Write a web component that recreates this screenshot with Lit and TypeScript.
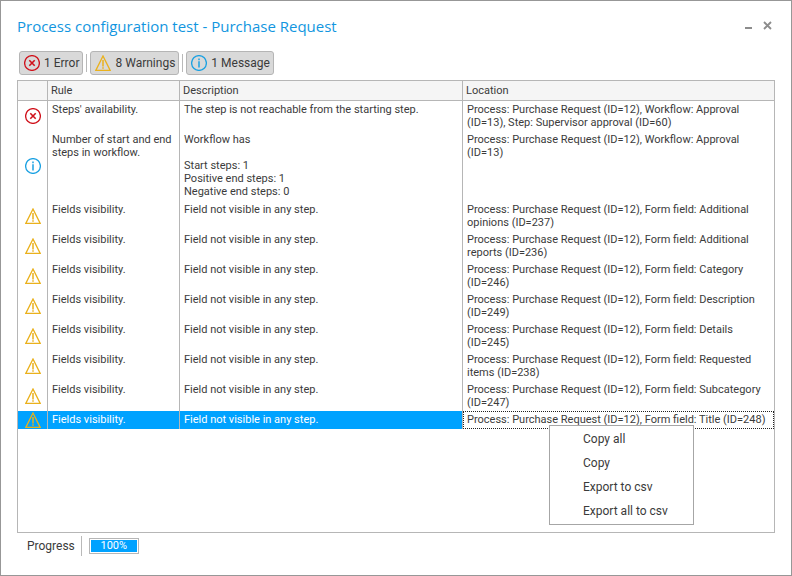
import { LitElement, html, svg, css, nothing } from "lit";
import { customElement, property, state } from "lit/decorators.js";
import { classMap } from "lit/directives/class-map.js";

type Severity = "error" | "warning" | "info";

interface Finding {
  severity: Severity;
  rule: string;
  description: string;
  location: string;
}

const fieldFinding = (field: string, id: number): Finding => ({
  severity: "warning",
  rule: "Fields visibility.",
  description: "Field not visible in any step.",
  location: `Process: Purchase Request (ID=12), Form field: ${field} (ID=${id})`,
});

const FINDINGS: Finding[] = [
  {
    severity: "error",
    rule: "Steps' availability.",
    description: "The step is not reachable from the starting step.",
    location:
      "Process: Purchase Request (ID=12), Workflow: Approval (ID=13), Step: Supervisor approval (ID=60)",
  },
  {
    severity: "info",
    rule: "Number of start and end steps in workflow.",
    description:
      "Workflow has\n\nStart steps: 1\nPositive end steps: 1\nNegative end steps: 0",
    location: "Process: Purchase Request (ID=12), Workflow: Approval (ID=13)",
  },
  fieldFinding("Additional opinions", 237),
  fieldFinding("Additional reports", 236),
  fieldFinding("Category", 246),
  fieldFinding("Description", 249),
  fieldFinding("Details", 245),
  fieldFinding("Requested items", 238),
  fieldFinding("Subcategory", 247),
  fieldFinding("Title", 248),
];

const FILTERS: { severity: Severity; label: string }[] = [
  { severity: "error", label: "1 Error" },
  { severity: "warning", label: "8 Warnings" },
  { severity: "info", label: "1 Message" },
];

const MENU = ["Copy all", "Copy", "Export to csv", "Export all to csv"];

@customElement("severity-icon")
export class SeverityIcon extends LitElement {
  @property() severity: Severity = "info";

  static styles = css`
    :host { display: block; width: 16px; height: 16px; flex: none; }
    svg { display: block; fill: none; }
    .error { stroke: #d0111b; }
    .warning { stroke: #eab11c; }
    .info { stroke: #1ba1e2; }
  `;

  private shape() {
    switch (this.severity) {
      case "error":
        return svg`<circle cx="8" cy="8" r="7.4" stroke-width="1.3"/>
          <path d="M5.3 5.3l5.4 5.4M10.7 5.3l-5.4 5.4" stroke-width="1.6"/>`;
      case "warning":
        return svg`<path d="M8 1L15.2 15.4H.8z" stroke-width="1.3"/>
          <path d="M8 5v6.4M8 12.2v1.6" stroke-width="1.5"/>`;
      default:
        return svg`<circle cx="8" cy="8" r="7.4" stroke-width="1.3"/>
          <path d="M8 6.2v6.4M8 3.4v1.8" stroke-width="1.5"/>`;
    }
  }

  render() {
    return html`<svg class=${this.severity} width="16" height="16" viewBox="0 0 16 16" aria-hidden="true">${this.shape()}</svg>`;
  }
}

@customElement("app-root")
export class AppRoot extends LitElement {
  @state() private selected = FINDINGS.length - 1;

  static styles = css`
    :host {
      display: block;
      font: 12px/16px Roboto, "Noto Sans", sans-serif;
      color: #3b3b3b;
    }
    * { box-sizing: border-box; }
    button { font: inherit; color: inherit; margin: 0; }
    .window {
      min-height: 100vh;
      display: flex;
      flex-direction: column;
      padding: 14px 16px 19px;
      border: 1px solid #979797;
      background: #fff;
    }
    .titlebar { display: flex; justify-content: space-between; }
    h1 {
      margin: 0;
      font-family: "Open Sans", "Noto Sans", sans-serif;
      font-size: 15px;
      line-height: 22px;
      font-weight: 400;
      color: #1296e0;
    }
    .controls { display: flex; gap: 8px; padding-top: 5px; }
    .control {
      width: 12px;
      height: 12px;
      padding: 0;
      border: 0;
      background: none;
    }
    .control svg { display: block; stroke: #8c8c8c; fill: none; }
    .toolbar {
      display: flex;
      align-items: center;
      gap: 3px;
      padding: 14px 2px 5px;
    }
    .divider { width: 1px; background: #b9b9b9; height: 18px; }
    .filter {
      display: flex;
      align-items: center;
      gap: 4px;
      height: 24px;
      padding: 0 3px 0 4px;
      border: 1px solid #b5b5b5;
      border-radius: 3px;
      background: #d9d9d9;
    }
    .grid {
      flex: 1;
      border: 1px solid #b6b6b6;
      font-size: 11px;
      line-height: 13px;
    }
    table {
      width: 100%;
      table-layout: fixed;
      border-collapse: separate;
      border-spacing: 0;
    }
    .col-icon { width: 30px; }
    .col-rule { width: 132px; }
    .col-desc { width: 283px; }
    th {
      height: 20px;
      padding: 0 3px;
      text-align: left;
      font-weight: 400;
      background: #f5f5f5;
      border-bottom: 1px solid #b6b6b6;
    }
    th, td { border-right: 1px solid #b6b6b6; }
    th:last-child, td:last-child { border-right: 0; }
    td {
      height: 18px;
      padding: 2px 4px;
      vertical-align: top;
      white-space: pre-line;
    }
    .info td { height: 70px; }
    td.icon-cell { padding: 0 0 0 7px; vertical-align: middle; white-space: normal; }
    .selected td { background: #00a2ff; color: #fff; }
    .selected td.focus {
      position: relative;
      background: #fff;
      color: inherit;
      outline: 1px dotted #222;
      outline-offset: -1px;
    }
    .menu {
      position: absolute;
      left: 86px;
      top: 14px;
      width: 145px;
      margin: 0;
      padding: 1px 0;
      border: 1px solid #a6a6a6;
      background: #fff;
      list-style: none;
      white-space: normal;
    }
    .menu button {
      display: block;
      width: 100%;
      height: 24px;
      padding: 0 0 0 33px;
      border: 0;
      background: none;
      text-align: left;
      font-size: 12px;
      line-height: 16px;
    }
    .status { display: flex; align-items: center; padding: 3px 0 0 10px; }
    .status .divider { height: 20px; margin: 0 7px 0 6px; }
    .progress {
      width: 50px;
      height: 16px;
      padding: 1px;
      border: 1px solid #b6b6b6;
    }
    .bar {
      height: 12px;
      background: #00a2ff;
      color: #fff;
      font-size: 11px;
      line-height: 12px;
      text-align: center;
    }
  `;

  private menu() {
    return html`<ul class="menu" role="menu">${MENU.map(
      (item) => html`<li role="none"><button role="menuitem">${item}</button></li>`
    )}</ul>`;
  }

  private row(f: Finding, i: number) {
    const selected = i === this.selected;
    return html`<tr class=${classMap({ [f.severity]: true, selected })} @click=${() => (this.selected = i)}>
      <td class="icon-cell"><severity-icon severity=${f.severity}></severity-icon></td>
      <td>${f.rule}</td>
      <td>${f.description}</td>
      <td class=${classMap({ focus: selected })}>${f.location}${selected ? this.menu() : nothing}</td>
    </tr>`;
  }

  render() {
    return html`<main class="window">
      <header class="titlebar">
        <h1>Process configuration test - Purchase Request</h1>
        <div class="controls">
          <button class="control" aria-label="Minimize">
            <svg width="12" height="12" viewBox="0 0 12 12"><path d="M2 8h7" stroke-width="2"/></svg>
          </button>
          <button class="control" aria-label="Close">
            <svg width="12" height="12" viewBox="0 0 12 12"><path d="M1 2l7 7M8 2l-7 7" stroke-width="1.8"/></svg>
          </button>
        </div>
      </header>
      <div class="toolbar">
        ${FILTERS.map(
          (f, i) => html`${i ? html`<span class="divider"></span>` : nothing}
            <button class="filter" aria-pressed="true">
              <severity-icon severity=${f.severity}></severity-icon>${f.label}
            </button>`
        )}
      </div>
      <section class="grid">
        <table>
          <colgroup>
            <col class="col-icon" /><col class="col-rule" /><col class="col-desc" /><col />
          </colgroup>
          <thead>
            <tr><th aria-label="Severity"></th><th>Rule</th><th>Description</th><th>Location</th></tr>
          </thead>
          <tbody>${FINDINGS.map((f, i) => this.row(f, i))}</tbody>
        </table>
      </section>
      <footer class="status">
        <span id="progress-label">Progress</span>
        <span class="divider"></span>
        <div class="progress" role="progressbar" aria-labelledby="progress-label" aria-valuenow="100">
          <div class="bar">100%</div>
        </div>
      </footer>
    </main>`;
  }
}
